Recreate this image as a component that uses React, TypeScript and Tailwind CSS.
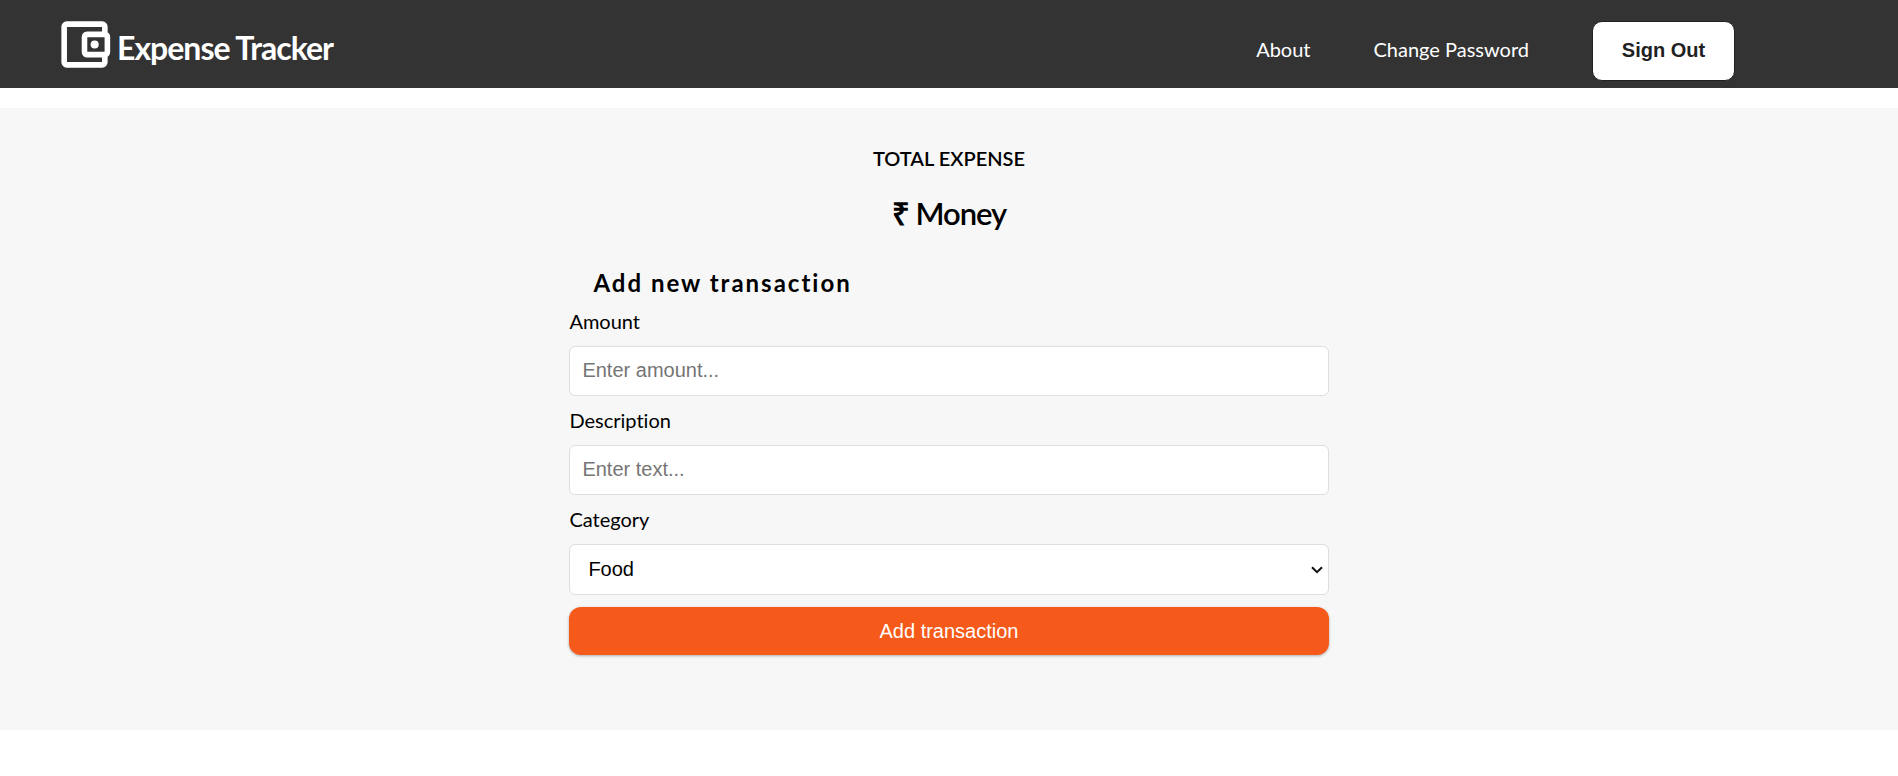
import { useState } from "react";
import type { ReactNode } from "react";

const categories = ["Food", "Travel", "Shopping", "Bills", "Other"];

const controlClass =
  "block w-full rounded-md border border-[#dedede] bg-white pb-0.5 font-['Liberation_Sans',Arial,sans-serif] text-xl leading-6 text-black placeholder:text-[#757575]";

function WalletIcon() {
  return (
    <svg viewBox="0 0 24 24" className="size-[61px]" fill="none" stroke="currentColor" strokeWidth="2.2" aria-hidden="true">
      <path d="M20 7.2V5a1 1 0 0 0-1-1H5a1 1 0 0 0-1 1v14a1 1 0 0 0 1 1h14a1 1 0 0 0 1-1v-2.2" />
      <rect x="12" y="8" width="9" height="8" rx="1" />
      <circle cx="16" cy="12" r="1.6" fill="currentColor" stroke="none" />
    </svg>
  );
}

function Field({ id, label, children }: { id: string; label: string; children: ReactNode }) {
  return (
    <div className="mb-3 flex flex-col gap-3">
      <label htmlFor={id} className="text-xl leading-[25px]">
        {label}
      </label>
      {children}
    </div>
  );
}

function Header() {
  return (
    <header className="flex h-[88px] items-center justify-between bg-[#333] pr-[163px] pl-[54px] text-white">
      <a href="#" className="flex items-center gap-0.5 pt-px text-[32px] leading-10 font-bold tracking-[-1px]">
        <WalletIcon />
        <span className="pt-1.5">Expense Tracker</span>
      </a>
      <nav className="flex items-center gap-[63px] pt-3.5 text-xl">
        <a href="#about" className="pb-1">
          About
        </a>
        <a href="#password" className="pb-1">
          Change Password
        </a>
        <button
          type="button"
          className="h-[60px] w-[143px] rounded-[10px] border border-[#212121] bg-white pb-0.5 font-['Liberation_Sans',Arial,sans-serif] text-xl font-bold text-[#212121]"
        >
          Sign Out
        </button>
      </nav>
    </header>
  );
}

export default function App() {
  const [amount, setAmount] = useState("");
  const [text, setText] = useState("");
  const [category, setCategory] = useState("Food");

  return (
    <div className="bg-white font-[Lato,sans-serif] text-black [font-variant-ligatures:none]">
      <Header />
      <main className="mt-5 flex flex-col items-center bg-[#f7f7f7] pt-[35px] pb-[75px]">
        <h2 className="text-xl leading-[30px] font-semibold">TOTAL EXPENSE</h2>
        <p className="mt-5 text-[31px] leading-10 font-semibold tracking-[-1px]">
          <span className="font-['Liberation_Sans',Arial,sans-serif] leading-none font-bold">₹</span> Money
        </p>
        <form className="mt-[35px] w-2/5" onSubmit={(event) => event.preventDefault()}>
          <h3 className="mb-[11px] pl-6 text-2xl leading-[30px] font-bold tracking-[2px]">
            Add new transaction
          </h3>
          <Field id="amount" label="Amount">
            <input
              id="amount"
              type="text"
              inputMode="decimal"
              placeholder="Enter amount..."
              value={amount}
              onChange={(event) => setAmount(event.target.value)}
              className={`${controlClass} h-[50px] px-3`}
            />
          </Field>
          <Field id="text" label="Description">
            <input
              id="text"
              type="text"
              placeholder="Enter text..."
              value={text}
              onChange={(event) => setText(event.target.value)}
              className={`${controlClass} h-[50px] px-3`}
            />
          </Field>
          <Field id="category" label="Category">
            <div className="relative">
              <select
                id="category"
                value={category}
                onChange={(event) => setCategory(event.target.value)}
                className={`${controlClass} h-[51px] appearance-none pr-8 pl-[18px]`}
              >
                {categories.map((name) => (
                  <option key={name}>{name}</option>
                ))}
              </select>
              <svg
                viewBox="0 0 12 8"
                className="pointer-events-none absolute top-[22px] right-1.5 h-2 w-3"
                fill="none"
                stroke="#101010"
                strokeWidth="2"
                aria-hidden="true"
              >
                <path d="M1 1.2 6 6.2 11 1.2" />
              </svg>
            </div>
          </Field>
          <button
            type="submit"
            className="h-12 w-full rounded-xl bg-[#f55a1a] font-['Liberation_Sans',Arial,sans-serif] text-xl text-white shadow-[0_1px_3px_rgba(0,0,0,0.3)]"
          >
            Add transaction
          </button>
        </form>
      </main>
    </div>
  );
}
